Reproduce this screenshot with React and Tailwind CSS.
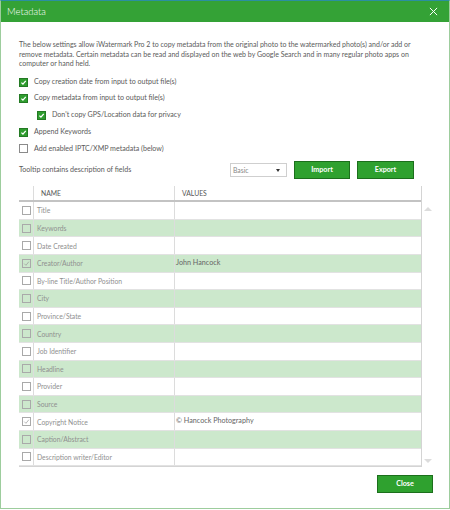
import React from "react";

const rows = [
  { name: "Title" },
  { name: "Keywords", green: true },
  { name: "Date Created" },
  { name: "Creator/Author", green: true, checked: true, value: "John Hancock" },
  { name: "By-line Title/Author Position" },
  { name: "City", green: true },
  { name: "Province/State" },
  { name: "Country", green: true },
  { name: "Job Identifier" },
  { name: "Headline", green: true },
  { name: "Provider" },
  { name: "Source", green: true },
  { name: "Copyright Notice", checked: true, value: "© Hancock Photography" },
  { name: "Caption/Abstract", green: true },
  { name: "Description writer/Editor" },
];

function GreenCheck({ checked = true }) {
  if (!checked) {
    return (
      <span className="w-[9px] h-[9px] border border-[#8a8a8a] bg-white flex-shrink-0" />
    );
  }
  return (
    <span className="w-[9px] h-[9px] bg-[#2f9d2f] border border-[#247a24] flex items-center justify-center flex-shrink-0">
      <svg width="7" height="7" viewBox="0 0 10 10" fill="none">
        <path d="M2 5.2 L4.2 7.4 L8.2 2.6" stroke="white" strokeWidth="1.8" />
      </svg>
    </span>
  );
}

function Option({ label, checked = true, indent = false }) {
  return (
    <div className={`h-[16.7px] flex items-center gap-[6px] ${indent ? "pl-[18px]" : ""}`}>
      <GreenCheck checked={checked} />
      <span className="text-[7.1px] text-[#5a5a5a] whitespace-nowrap">{label}</span>
    </div>
  );
}

function RowCheck({ checked }) {
  return (
    <span className="w-[9px] h-[9px] border border-[#a9a9a9] flex items-center justify-center">
      {checked && (
        <svg width="7" height="7" viewBox="0 0 10 10" fill="none">
          <path d="M1.8 5.2 L4.2 7.6 L8.4 2.4" stroke="#9a9a9a" strokeWidth="1" />
        </svg>
      )}
    </span>
  );
}

export default function App() {
  return (
    <div className="w-[450px] h-[509px] flex flex-col bg-white border-t border-t-[#2b8fa0] border-x border-b border-[#9dcd9d] font-['Lato',sans-serif] overflow-hidden">
      {/* Title bar */}
      <div className="h-[21px] bg-[#34a236] flex items-center justify-between pl-[6px] pr-[11px] flex-shrink-0">
        <span className="text-white text-[9.5px] leading-none font-light">Metadata</span>
        <svg width="9" height="9" viewBox="0 0 10 10" fill="none">
          <path d="M1 1 L9 9 M9 1 L1 9" stroke="white" strokeWidth="1.1" />
        </svg>
      </div>

      <div className="flex flex-col pl-[17px] pr-[16px]">
        {/* Description */}
        <p className="mt-[18px] pl-[1px] text-[7px] leading-[9.6px] text-[#5a5a5a] whitespace-nowrap">
          The below settings allow iWatermark Pro 2 to copy metadata from the original photo to the watermarked photo(s) and/or add or
          <br />
          remove metadata. Certain metadata can be read and displayed on the web by Google Search and in many regular photo apps on
          <br />
          computer or hand held.
        </p>

        {/* Options */}
        <div className="mt-[5px] flex flex-col pl-[1px]">
          <Option label="Copy creation date from input to output file(s)" />
          <Option label="Copy metadata from input to output file(s)" />
          <Option label="Don't copy GPS/Location data for privacy" indent />
          <Option label="Append Keywords" />
          <Option label="Add enabled IPTC/XMP metadata (below)" checked={false} />
        </div>

        {/* Tooltip / actions */}
        <div className="mt-[4px] h-[18px] flex items-center pl-[1px] pr-[19px]">
          <span className="text-[7.1px] text-[#5a5a5a] flex-1">Tooltip contains description of fields</span>
          <div className="w-[57px] h-[14px] border border-[#cfcfcf] flex items-center justify-between pl-[2px] pr-[6px]">
            <span className="text-[6.8px] text-[#888]">Basic</span>
            <span className="w-0 h-0 border-l-[2.5px] border-r-[2.5px] border-t-[3px] border-l-transparent border-r-transparent border-t-[#333]" />
          </div>
          <button className="ml-[7px] w-[56px] h-[18px] bg-[#2fa12f] border border-[#1c6f1c] text-white text-[7.2px] font-bold">
            Import
          </button>
          <button className="ml-[7px] w-[57px] h-[18px] bg-[#2fa12f] border border-[#1c6f1c] text-white text-[7.2px] font-bold">
            Export
          </button>
        </div>

        {/* Table */}
        <div className="mt-[7px] flex pl-[1px]">
          <div className="flex-1 flex flex-col border-r border-[#d4d4d4] border-b">
            <div className="h-[16px] flex border-b-2 border-[#c3c3c3]">
              <div className="w-[15px] border-r border-[#dcdcdc]" />
              <div className="w-[141px] border-r border-[#dcdcdc] flex items-center pl-[7px] text-[6.8px] text-[#555]">
                NAME
              </div>
              <div className="flex-1 flex items-center pl-[7px] text-[6.8px] text-[#555]">VALUES</div>
            </div>
            {rows.map((r) => (
              <div
                key={r.name}
                className={`h-[17.6px] flex border-b border-[#e2e2e2] ${r.green ? "bg-[#cce8cc]" : "bg-white"}`}
              >
                <div className="w-[15px] border-r border-[#dcdcdc] flex items-center justify-end pr-[2px]">
                  <RowCheck checked={r.checked} />
                </div>
                <div className="w-[141px] border-r border-[#dcdcdc] flex items-center pl-[3px] text-[6.8px] text-[#909090]">
                  {r.name}
                </div>
                <div className="flex-1 flex items-center pl-[1px] text-[7.2px] text-[#666]">{r.value}</div>
              </div>
            ))}
          </div>
          {/* scroll column */}
          <div className="w-[11px] flex flex-col justify-between items-center pt-[21px] pb-[4px]">
            <span className="w-0 h-0 border-l-[4px] border-r-[4px] border-b-[4px] border-l-transparent border-r-transparent border-b-[#dcdcdc]" />
            <span className="w-0 h-0 border-l-[4px] border-r-[4px] border-t-[4px] border-l-transparent border-r-transparent border-t-[#dcdcdc]" />
          </div>
        </div>

        {/* Close */}
        <div className="mt-[8px] flex justify-end">
          <button className="w-[56px] h-[18px] bg-[#2fa12f] border border-[#1c6f1c] text-white text-[7.2px] font-bold">
            Close
          </button>
        </div>
      </div>
    </div>
  );
}
